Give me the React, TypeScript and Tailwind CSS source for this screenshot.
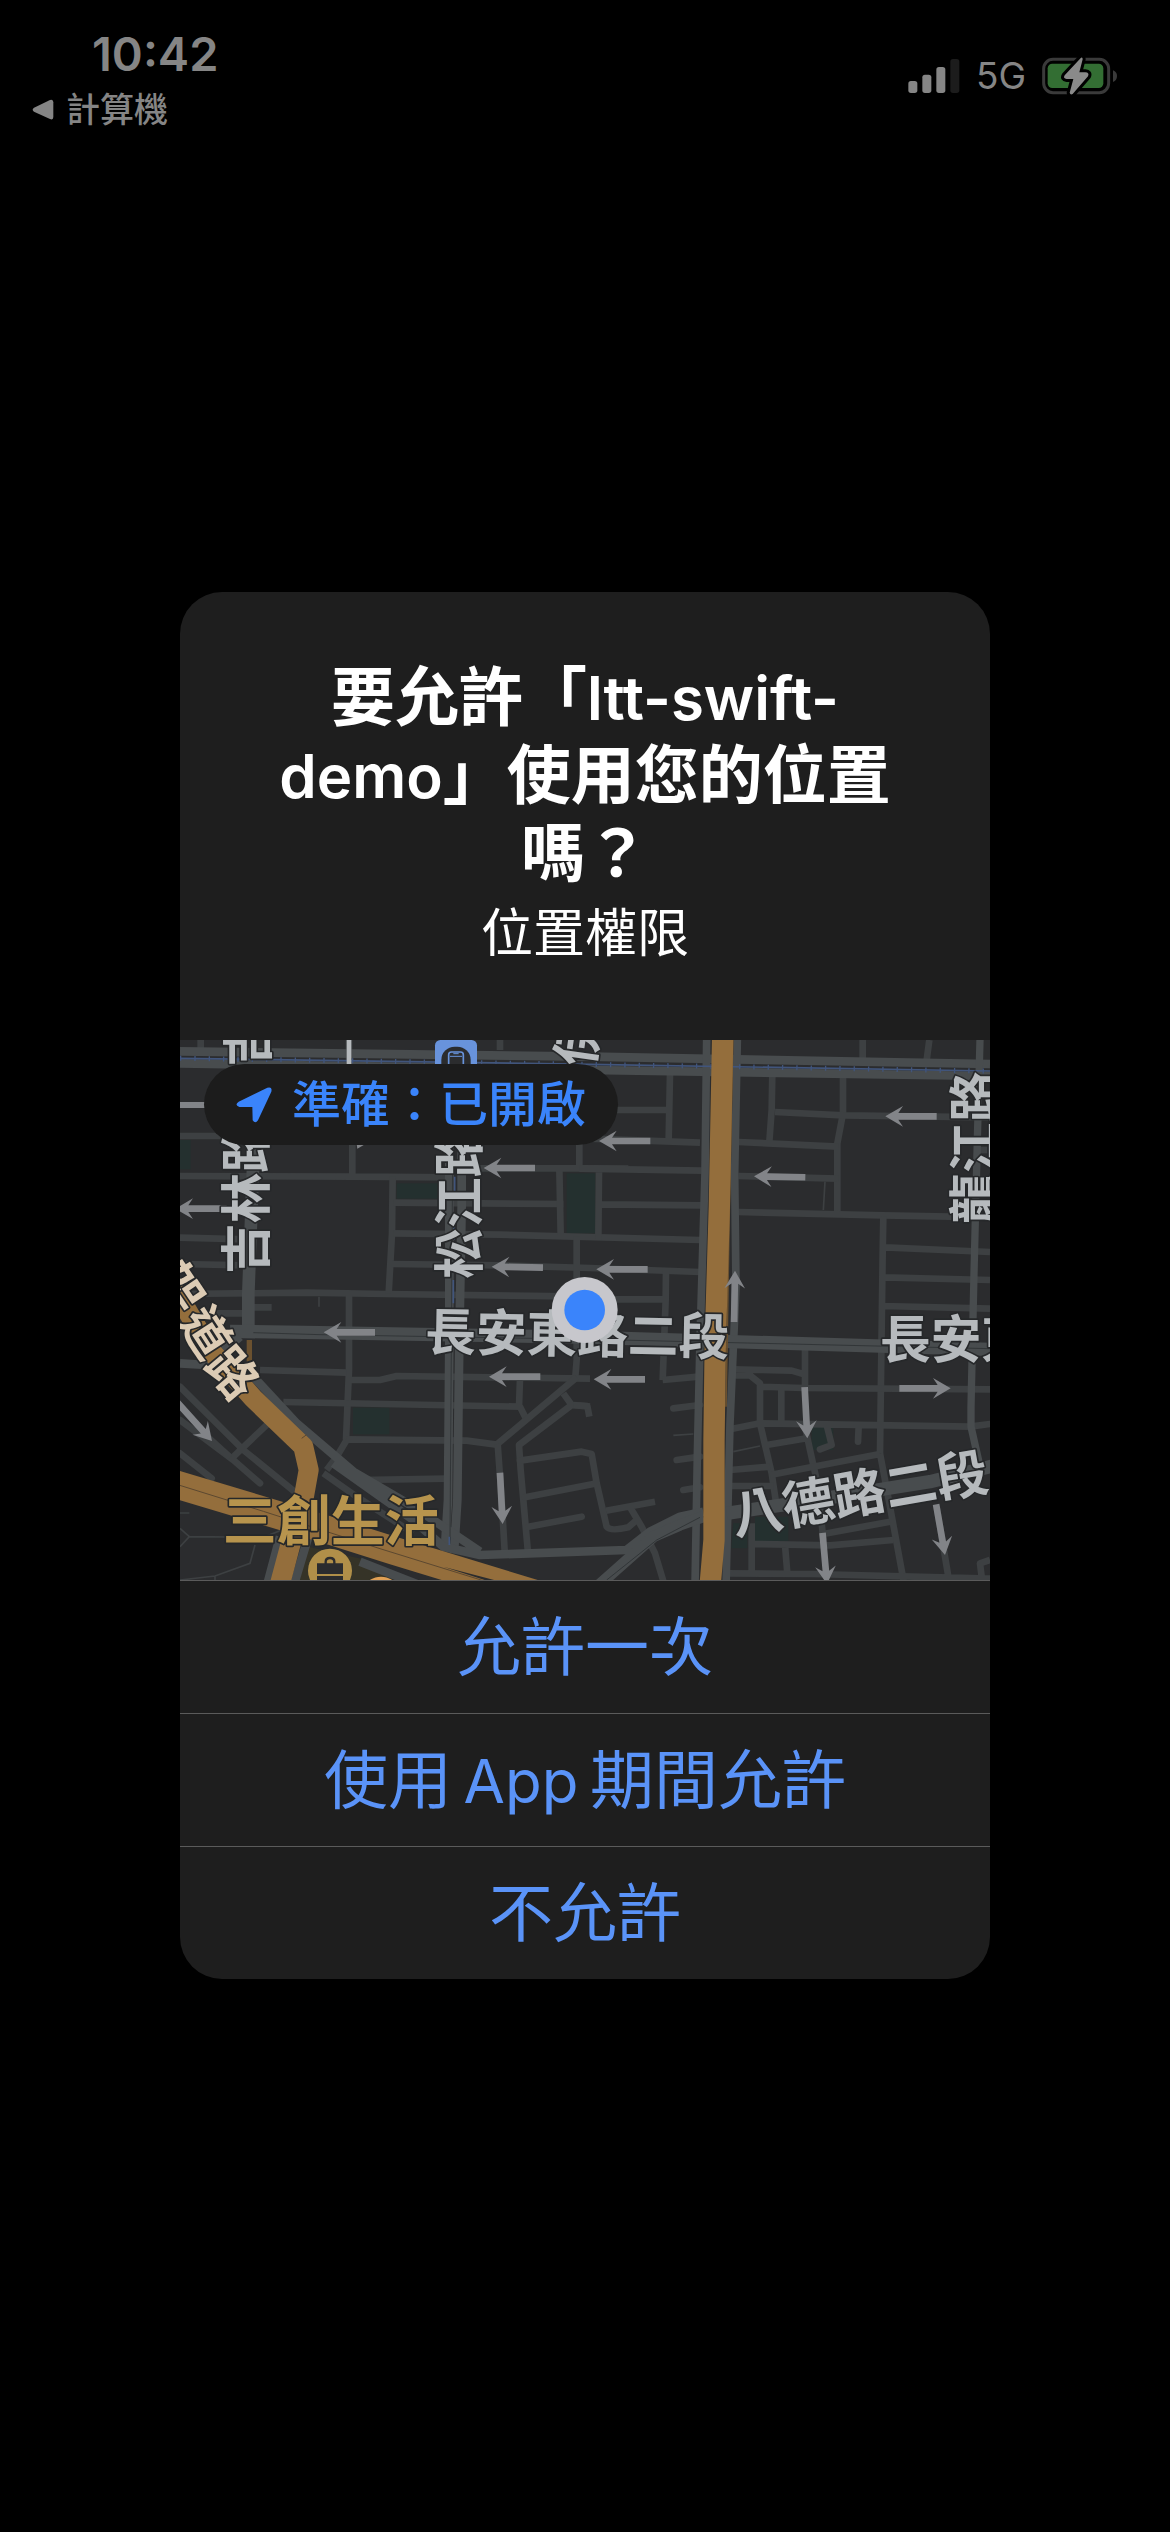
import type { ReactNode } from "react";

const minor = "#3d4042";
const major = "#484c4e";
const orange = "#946e3c";

function Arrow({ x, y, angle }: { x: number; y: number; angle: number }) {
  return (
    <path
      transform={`translate(${x} ${y}) rotate(${angle})`}
      d="M0 0 L-53 -31 L-39 -10 L-154 -10 L-154 10 L-39 10 L-53 31 Z"
      fill="#828488"
    />
  );
}

interface LabelProps {
  x: number;
  y: number;
  angle?: number;
  fill?: string;
  size?: number;
  centered?: boolean;
  children: ReactNode;
}

function Label({ x, y, angle = 0, fill = "#b6babd", size = 152, centered = false, children }: LabelProps) {
  return (
    <text
      transform={`translate(${x} ${y}) rotate(${angle})`}
      textAnchor={centered ? "middle" : "start"}
      dy={centered ? size * 0.38 : 0}
      fill={fill}
      stroke="#26282a"
      strokeWidth="10"
      strokeLinejoin="round"
      paintOrder="stroke"
      fontSize={size}
      fontWeight="600"
    >
      {children}
    </text>
  );
}

function Map() {
  return (
    <svg viewBox="0 0 2430 1620" className="block h-auto w-full" role="img" aria-label="地圖">
      <rect width="2430" height="1620" fill="#2b2c2e" />

      <g fill="#24302f">
        <rect x="0" y="300" width="32" height="88" />
        <rect x="650" y="430" width="125" height="46" />
        <rect x="1160" y="400" width="86" height="180" />
        <rect x="519" y="1103" width="109" height="80" />
        <rect x="1895" y="1160" width="65" height="70" />
        <path d="M1660 1450H1702V1525H1654Z M1725 1430H1825V1503H1725Z" />
      </g>
      <path d="M385 1520 L560 1560 L640 1620 H350Z" fill="#353327" />

      <g fill="none" stroke={minor} strokeWidth="20" strokeLinejoin="round">
        <path d="M62 0V30 M960 0V30 M507 0V100" />
        <path d="M0 288H200 M0 408L520 410L820 412 M517 300V405" />
        <path d="M0 593L200 598 M0 672L200 676 M0 762L380 758L620 762L1230 770" />
        <path d="M638 410L636 580L626 760 M507 765V990L498 1200" />
        <path d="M640 488L1150 492 M640 580L960 584L1560 600 M636 672L960 676L1230 684L1560 696" />
        <path d="M860 385H1240L1345 386 M1138 385L1142 585 M1198 300V385 M1190 590V960L1186 1010" />
        <path d="M1230 210H1465 M1470 100L1466 300 M1230 296L1560 308 M1198 386L1565 392 M1260 493L1565 496 M1257 390L1255 600" />
        <path d="M1458 690L1457 780L1448 1020 M1300 778H1456" />
        <path d="M2048 0V60 M2248 0L2240 60 M1777 100L1775 210L1768 306 M1989 100V220L1972 310V530" />
        <path d="M1785 216L1990 226L2430 232 M1675 306L1975 320 M1675 408L1975 416 M1675 516L2110 526L2430 532" />
        <path d="M2110 530L2108 640L2100 1240 M2115 622L2430 636 M2110 712L2430 720 M2110 798L2430 806" />
        <path d="M2400 330H2430" />
        <path d="M0 820H190 M190 802H275 M240 990L500 998 M510 1020H600L650 1008L1230 1016 M310 1086L1020 1100L1040 1140 M1020 1015L1017 1100" />
        <path d="M500 1198L860 1202L950 1214L1190 1012 M500 1200L470 1250 M440 1290L470 1250 M540 1320L800 1316" />
        <path d="M953 1212L965 1380L975 1550 M1230 1100L1175 1095L1150 1060 M1175 1095L1017 1215L1022 1290L1045 1550" />
        <path d="M1020 1262L1205 1235L1235 1242L1250 1330L1280 1460Q1290 1475 1345 1462L1370 1440 M1035 1372L1240 1332 M1045 1460L1205 1430" strokeLinecap="round" />
        <path d="M1228 1130L1222 1098L1180 1095" />
        <path d="M0 1040L190 1230L350 1360 M0 1140L160 1260L240 1330 M155 1255L265 1150 M0 1240L95 1315" strokeLinecap="round" />
        <path d="M150 1252L60 1170 M430 1300L530 1370L700 1480" />
        <path d="M1448 1020L1555 1010 M1278 1412L1425 1385 M1352 1405L1385 1460L1425 1540L1455 1640" />
        <path d="M1480 1105L1560 1095 M1490 1260L1560 1250 M1510 1350L1560 1342" strokeLinecap="round" />
        <path d="M1875 920V1050 M1660 988L1835 992L1870 1002 M1660 1006H1710L1740 1030V1150 M1740 1040L1870 1044L2430 1048 M1804 1040V1150" />
        <path d="M1650 1168L1740 1150L2370 1160L2430 1152 M1740 1150L1775 1300L1790 1400 M1760 1215L1880 1195 M1875 1160L1890 1230L1910 1320 M1940 1155L1955 1215L1920 1228 M2036 1160L2034 1205" strokeLinecap="round" />
        <path d="M1650 1290L1770 1280 M1770 1305L2100 1242 M1640 1338H1780 M2100 1240L2130 1400L2174 1640" />
        <path d="M1640 1600L1900 1602L2430 1616 M1715 1450V1600 M1720 1512L1950 1516L2140 1500 M1815 1515L1822 1600 M1920 1400L1930 1500 M1930 1482L2130 1445 M2270 1400L2305 1610 M2430 1560L2400 1570L2405 1610" />
      </g>

      <g fill="none" stroke={minor} strokeWidth="5">
        <path d="M417 770V800 M1935 425L1930 510 M1480 1186L1540 1182 M1660 1235L1740 1218 M0 1419H28 M0 1465L28 1490L250 1492L330 1460 M28 1490L0 1520 M225 1515L210 1570L105 1608L0 1620 M105 1608V1620" />
      </g>

      <g fill="none" stroke={major} strokeWidth="26" strokeLinejoin="round">
        <path d="M0 34L1230 50L2430 72 M0 70L1230 90L2430 108" />
        <path d="M230 90L205 760V880" strokeWidth="38" />
        <path d="M808 60V500L808 900L804 1380L795 1520 M845 60V500L838 900L832 1380L822 1540" />
        <path d="M1580 0L1575 400L1560 900L1552 1250L1545 1640 M1672 0L1664 400L1668 740L1650 1150L1638 1640" strokeWidth="23" />
        <path d="M150 874L420 878L1230 892L2430 928" strokeWidth="40" />
        <path d="M0 970L80 975L180 890" />
        <path d="M220 1010L350 1150L520 1295L700 1400L900 1535 M460 1270L700 1440L790 1520L900 1545L1340 1530L1410 1475L1500 1430L1570 1415" />
        <path d="M1240 1650L1420 1490L1500 1455L1570 1430" strokeWidth="34" />
        <path d="M540 1565L730 1640 M300 1490L260 1640 M385 1490L340 1640" />
        <path d="M1640 1420L1840 1390L2250 1325L2450 1275" strokeWidth="40" />
        <path d="M2400 0L2392 300L2382 700L2373 1100V1160L2400 1280" strokeWidth="22" />
      </g>
      <g fill="none" stroke="#323638" strokeWidth="3">
        <path d="M220 878L420 884L1230 898L2430 926 M1280 1620L1430 1500L1560 1432 M820 60L810 1500" />
      </g>

      <g stroke="#41557c" fill="none">
        <path d="M0 55L1230 73L2430 93" strokeWidth="5" />
        <path d="M0 55L1230 73L2430 93" strokeWidth="15" strokeDasharray="4 39" />
        <path d="M824 410V460 M822 550V600 M820 720V790 M808 1490V1515" strokeWidth="5" />
      </g>

      <g fill="none" stroke="#6b512f" strokeLinejoin="round">
        <path d="M1658 0L1648 500L1638 1100" strokeWidth="5" />
        <path d="M208 900V970" strokeWidth="16" />
      </g>
      <g fill="none" stroke={orange} strokeLinejoin="round">
        <path d="M1628 -10L1618 500L1606 900L1602 1200V1500L1590 1640" strokeWidth="64" />
        <path d="M-20 740L90 930L220 1075L370 1220L386 1290L370 1380L335 1500L295 1650" strokeWidth="60" />
        <path d="M-40 1325L250 1412L450 1472L640 1532L1300 1733" strokeWidth="84" />
      </g>
      <path d="M-20 1330L250 1414L600 1526L1000 1650 M365 1195L380 1184" fill="none" stroke="#5c4830" strokeWidth="3" />
      <path d="M790 1580L950 1622L920 1622Z" fill="#2b2c2e" />

      <Arrow x={-14} y={506} angle={180} />
      <path d="M0 186H90V204H0Z M530 313H555L532 326Z" fill="#828488" />
      <Arrow x={911} y={384} angle={180} />
      <Arrow x={935} y={680} angle={181} />
      <Arrow x={1257} y={303} angle={180} />
      <Arrow x={1722} y={409} angle={181} />
      <Arrow x={2116} y={229} angle={180} />
      <Arrow x={1249} y={688} angle={180} />
      <Arrow x={1665} y={692} angle={-89} />
      <Arrow x={431} y={877} angle={180} />
      <Arrow x={927} y={1010} angle={180} />
      <Arrow x={1241} y={1018} angle={180} />
      <Arrow x={2312} y={1045} angle={0} />
      <Arrow x={96} y={1203} angle={48} />
      <Arrow x={968} y={1452} angle={87} />
      <Arrow x={1882} y={1195} angle={87} />
      <Arrow x={1941} y={1632} angle={85} />
      <Arrow x={2295} y={1545} angle={80} />

      <Label x={256} y={702} angle={-90}>吉林路</Label>
      <Label x={260} y={80} angle={-90}>吉</Label>
      <Label x={893} y={716} angle={-90}>松江路</Label>
      <Label x={1238} y={84} angle={-82}>伊</Label>
      <path d="M500 0H514V100H500Z" fill="#b6babd" />
      <Label x={2438} y={551} angle={-90}>龍江路</Label>
      <Label x={735} y={930} angle={1}>長安東路二段</Label>
      <Label x={2100} y={954}>長安東路</Label>
      <Label x={1664} y={1484} angle={-10} size={156}>八德路二段</Label>
      <Label x={-2} y={742} angle={56} fill="#dccbb4" size={148} centered>架</Label>
      <Label x={80} y={876} angle={57} fill="#dccbb4" size={148} centered>道</Label>
      <Label x={160} y={998} angle={50} fill="#dccbb4" size={148} centered>路</Label>

      <circle cx="450" cy="1592" r="66" fill="#b08f49" />
      <path d="M411 1570H489V1602H411Z M411 1608H489V1640H411Z" fill="#2b2c2e" />
      <path d="M437 1572V1565Q437 1554 450 1554Q463 1554 463 1565V1572" fill="none" stroke="#2b2c2e" strokeWidth="7" />
      <ellipse cx="603" cy="1640" rx="44" ry="30" fill="#e0a055" />
      <Label x={128} y={1503} fill="#b7944d" size={162}>三創生活</Label>

      <rect x="765" y="0" width="126" height="120" rx="16" fill="#6893dc" />
      <rect x="784" y="20" width="88" height="110" rx="40" fill="#2b2c2e" />
      <rect x="806" y="36" width="44" height="60" rx="8" fill="none" stroke="#6893dc" strokeWidth="5" />
      <path d="M820 41H836 M810 49H846" stroke="#6893dc" strokeWidth="3" />

      <circle cx="1214" cy="810" r="99" fill="#c7c7cc" />
      <circle cx="1214" cy="810" r="61" fill="#3a84fb" />
    </svg>
  );
}

function StatusBar() {
  return (
    <header className="flex items-start justify-between pt-7 pr-13 pl-8 text-[#858585]">
      <div className="flex flex-col">
        <time className="pl-15 text-[47px] leading-[52px] font-semibold">10:42</time>
        <a href="#calculator" className="flex items-center gap-3 text-[34px] leading-[60px] font-medium">
          <svg viewBox="0 0 66 64" className="w-[22px]" aria-hidden="true">
            <path d="M6 26L54 3Q64 0 64 10V54Q64 64 54 60L6 38Q-2 32 6 26Z" fill="currentColor" />
          </svg>
          計算機
        </a>
      </div>
      <div className="flex items-center gap-4 pt-[22px]">
        <svg viewBox="110 108 156 108" className="w-[52px]" role="img" aria-label="訊號">
          <g fill="currentColor">
            <rect x="111" y="177" width="27" height="36" rx="8" />
            <rect x="153" y="158" width="27" height="55" rx="8" />
            <rect x="195" y="135" width="27" height="78" rx="8" />
            <rect x="237" y="111" width="27" height="102" rx="8" fill="#1c1c1c" />
          </g>
        </svg>
        <span className="text-[37px] leading-[52px]">5G</span>
        <svg viewBox="510 102 228 120" className="w-[76px]" role="img" aria-label="電池充電中">
          <rect x="515" y="112" width="195" height="100" rx="28" fill="none" stroke="#3a3a3a" strokeWidth="9" />
          <rect x="527" y="125" width="167" height="73" rx="14" fill="#336e33" />
          <path d="M723 145Q735 150 735 162Q735 175 723 180Z" fill="#3a3a3a" />
          <path
            d="M627 107L578 160Q572 170 584 171H604L593 212Q595 220 602 216L648 163Q653 152 640 151H622L632 112Q632 104 627 107Z"
            fill="#8a8a8a"
            stroke="#000"
            strokeWidth="18"
            strokeLinejoin="round"
            paintOrder="stroke"
          />
        </svg>
      </div>
    </header>
  );
}

function Latin({ children }: { children: ReactNode }) {
  return <span className="text-[60px] leading-none">{children}</span>;
}

const actions: { id: string; label: ReactNode }[] = [
  { id: "once", label: "允許一次" },
  { id: "in-use", label: <>使用{"\u2009"}<Latin>App</Latin>{"\u2009"}期間允許</> },
  { id: "deny", label: "不允許" },
];

export default function App() {
  return (
    <div
      lang="zh-Hant"
      className="flex min-h-screen flex-col bg-black font-[Inter,'Noto_Sans_CJK_TC',sans-serif]"
    >
      <StatusBar />
      <main className="flex justify-center px-6 pt-[452px] pb-40">
        <section
          role="dialog"
          aria-labelledby="title"
          className="w-full max-w-[810px] overflow-hidden rounded-[42px] bg-[#1e1e1e]"
        >
          <div className="px-20 pt-[66px] pb-16 text-center text-white">
            <h1 id="title" className="text-[64px] leading-[78px] font-semibold">
              要允許「<Latin>ltt-swift-demo</Latin>」使用您的位置嗎？
            </h1>
            <p className="text-[52px] leading-[84px]">位置權限</p>
          </div>
          <div className="relative">
            <Map />
            <button
              type="button"
              className="absolute top-6 left-6 flex h-[81px] items-center gap-5 rounded-full bg-[#1c1c1c] px-8 text-[49px] font-medium text-[#3a84fb]"
            >
              <svg viewBox="0 0 108 108" className="w-9" aria-hidden="true">
                <path d="M8 44L94 2Q110 -2 106 14L66 100Q58 112 50 100L49 60H10Q-6 54 8 44Z" fill="currentColor" />
              </svg>
              準確：已開啟
            </button>
          </div>
          <div className="flex flex-col">
            {actions.map(({ id, label }) => (
              <button
                key={id}
                type="button"
                className="h-[133px] border-t border-[#5b5b5b] text-[64px] leading-[80px] text-[#5a93f8]"
              >
                {label}
              </button>
            ))}
          </div>
        </section>
      </main>
    </div>
  );
}
